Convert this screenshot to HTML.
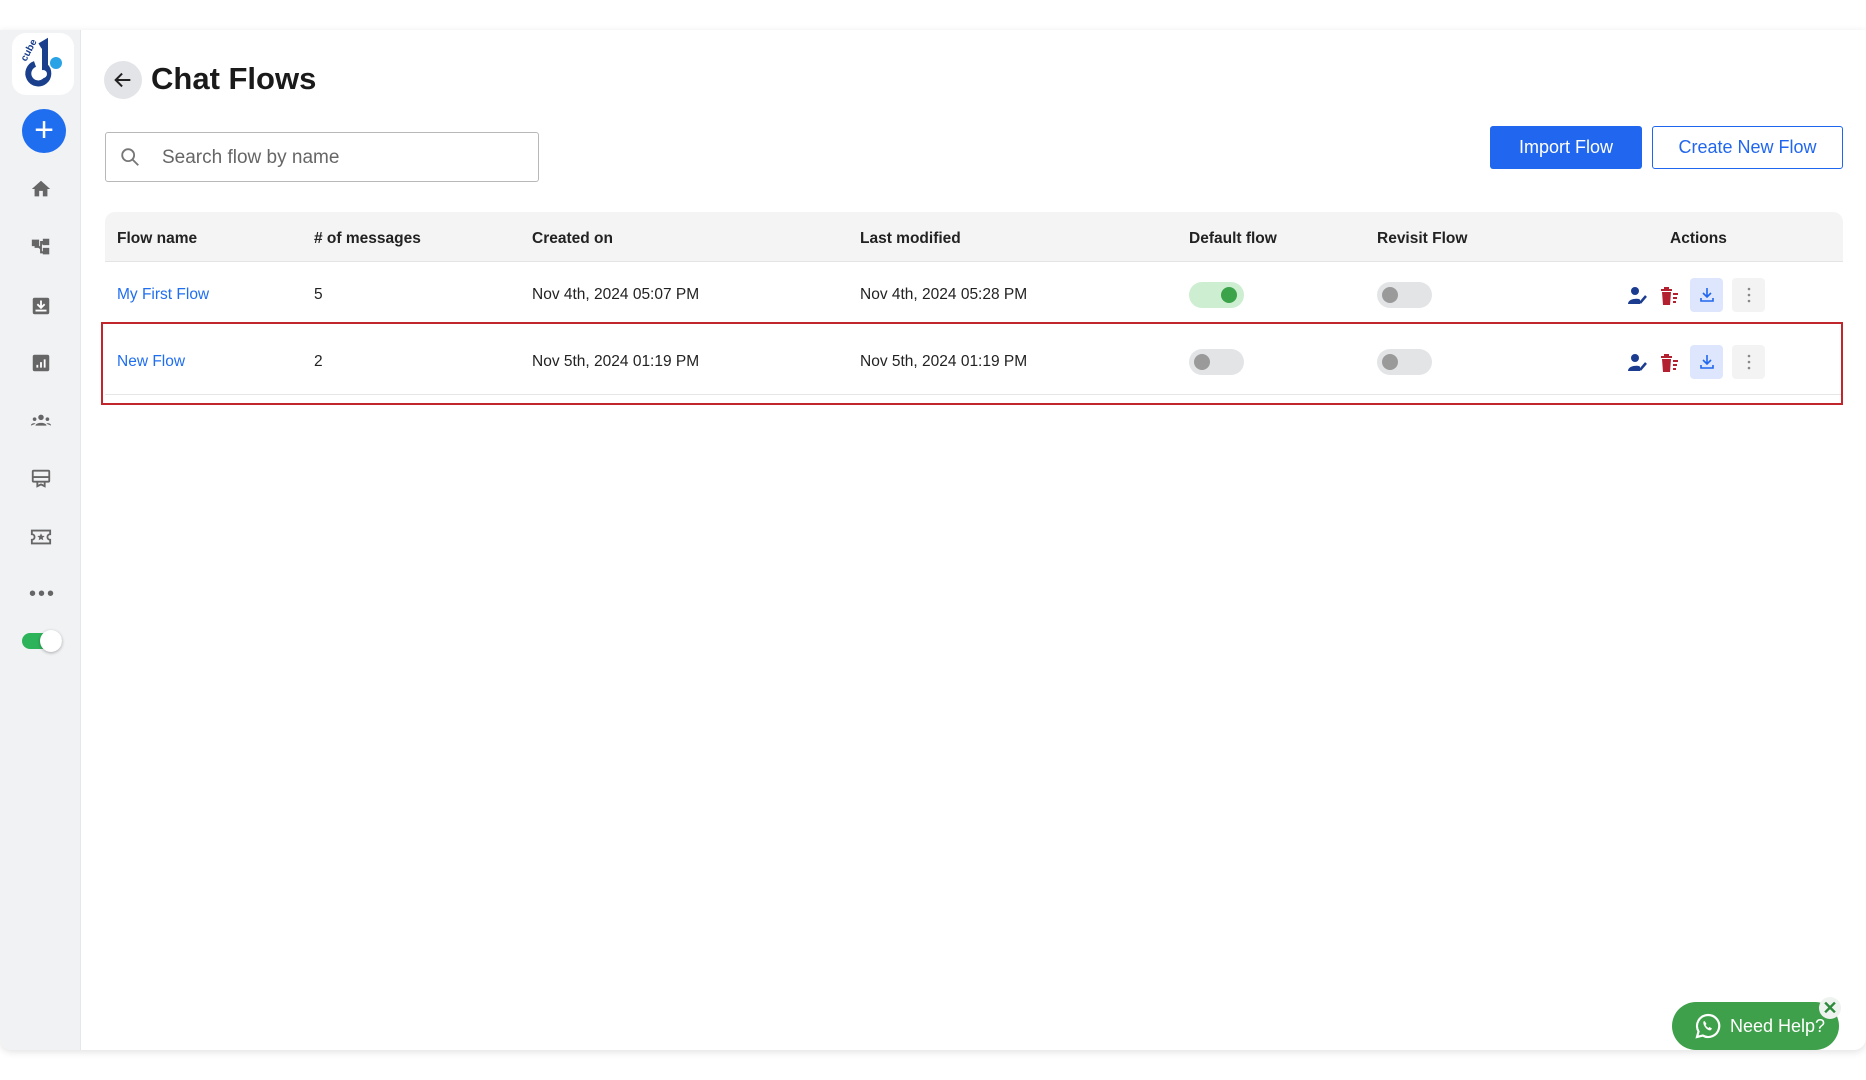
<!DOCTYPE html>
<html><head><meta charset="utf-8"><style>
*{box-sizing:border-box;margin:0;padding:0}
body{width:1866px;height:1080px;background:#fff;font-family:"Liberation Sans",sans-serif;position:relative;overflow:hidden;color:#222}
.card{position:absolute;left:0;top:30px;width:1866px;height:1020px;background:#fff;box-shadow:0 2px 8px rgba(0,0,0,.12);border-radius:0 0 12px 12px}
.side{position:absolute;left:0;top:30px;width:81px;height:1020px;background:#f1f2f4;border-right:1px solid #e6e7ea;border-radius:0 0 0 12px}
.ic{position:absolute;left:30px;width:22px;height:22px}
.abs{position:absolute}
.tg{position:absolute;width:55px;height:26px;border-radius:13px;background:#e3e4e6}
.tg i{position:absolute;top:5px;width:16px;height:16px;border-radius:50%;background:#9a9a9a}
</style></head><body>
<div class="card"></div>
<div class="side"></div>
<div class="abs" style="left:12px;top:33px;width:62px;height:62px;background:#fff;border-radius:14px"></div>
<svg class="abs" style="left:16px;top:36px" width="56" height="56" viewBox="0 0 56 56"><text x="0" y="0" font-size="10" font-weight="bold" fill="#1a3f8c" transform="translate(10 26) rotate(-62)" font-family="Liberation Sans">cube</text><path d="M24 10 L29 7 L29 36" fill="none" stroke="#1a3f8c" stroke-width="6"/><path d="M29 30 A10 10 0 1 1 19 28" fill="none" stroke="#1a3f8c" stroke-width="6"/><circle cx="40" cy="27" r="6" fill="#2aa3e6"/><circle cx="27" cy="38" r="4" fill="#fff"/></svg>
<div class="abs" style="left:22px;top:109px;width:44px;height:44px;border-radius:50%;background:#1f6ef0;color:#fff;font-size:34px;line-height:42px;text-align:center">+</div>
<svg class="ic" style="top:178px" viewBox="0 0 24 24"><path d="M12 3L2 12h3v8h5v-6h4v6h5v-8h3z" fill="#666"/></svg>
<svg class="ic" style="top:236px" viewBox="0 0 24 24"><path d="M3 5h6v5H3zM15 4h5v5h-5zM15 14h5v5h-5zM6 10v2h6v6h3M12 12V6.5h3" fill="#666" stroke="#666" stroke-width="2"/></svg>
<svg class="ic" style="top:295px" viewBox="0 0 24 24"><rect x="3" y="3" width="18" height="18" rx="2" fill="#666"/><path d="M12 6v8M8 10l4 4 4-4M6 17h12" stroke="#fff" stroke-width="2" fill="none"/></svg>
<svg class="ic" style="top:352px" viewBox="0 0 24 24"><rect x="3" y="3" width="18" height="18" rx="2" fill="#666"/><path d="M8 17v-3M12 17v-6M16 17V8" stroke="#fff" stroke-width="2"/></svg>
<svg class="ic" style="top:410px" viewBox="0 0 24 24"><circle cx="12" cy="8" r="3" fill="#666"/><circle cx="5" cy="10" r="2" fill="#666"/><circle cx="19" cy="10" r="2" fill="#666"/><path d="M6 17c0-4 12-4 12 0zM1 17c0-3 5-3 5-2zM23 17c0-3-5-3-5-2z" fill="#666"/></svg>
<svg class="ic" style="top:467px" viewBox="0 0 24 24"><rect x="3" y="4" width="18" height="12" rx="1" fill="none" stroke="#666" stroke-width="2"/><path d="M3 11h18M8 16v5l4-2 4 2v-5" stroke="#666" stroke-width="2" fill="none"/></svg>
<svg class="ic" style="top:526px" viewBox="0 0 24 24"><path d="M2 5h20v4a3 3 0 0 0 0 6v4H2v-4a3 3 0 0 0 0-6z" fill="none" stroke="#666" stroke-width="2"/><path d="M12 8l1.2 2.6 2.8.3-2.1 1.9.6 2.8L12 14.2 9.5 15.6l.6-2.8L8 10.9l2.8-.3z" fill="#666"/></svg>
<div class="abs" style="left:29px;top:590px;font-size:20px;color:#666;letter-spacing:2px;line-height:8px">•••</div>
<div class="abs" style="left:22px;top:633px;width:40px;height:16px;border-radius:8px;background:#2db35a"></div>
<div class="abs" style="left:40px;top:630px;width:22px;height:22px;border-radius:50%;background:#fff;box-shadow:0 1px 3px rgba(0,0,0,.3)"></div>

<div class="abs" style="left:104px;top:61px;width:38px;height:38px;border-radius:50%;background:#e3e4e8"></div>
<svg class="abs" style="left:112px;top:69px" width="22" height="22" viewBox="0 0 24 24"><path d="M20 12H5M11 5l-7 7 7 7" stroke="#222" stroke-width="2.2" fill="none"/></svg>
<div class="abs" style="left:151px;top:61px;font-size:31px;font-weight:bold;color:#1a1a1a">Chat Flows</div>

<div class="abs" style="left:105px;top:132px;width:434px;height:50px;border:1px solid #b8b8b8;border-radius:3px"></div>
<svg class="abs" style="left:119px;top:146px" width="22" height="22" viewBox="0 0 24 24"><circle cx="10" cy="10" r="6.5" stroke="#777" stroke-width="2" fill="none"/><path d="M15 15l6 6" stroke="#777" stroke-width="2"/></svg>
<div class="abs" style="left:162px;top:147px;font-size:19px;color:#666">Search flow by name</div>

<div class="abs" style="left:1490px;top:126px;width:152px;height:43px;background:#2166ee;border-radius:3px;color:#fff;font-size:18px;text-align:center;line-height:43px">Import Flow</div>
<div class="abs" style="left:1652px;top:126px;width:191px;height:43px;border:1.5px solid #2166ee;border-radius:3px;color:#2166ee;font-size:18px;text-align:center;line-height:41px">Create New Flow</div>

<div class="abs" style="left:105px;top:212px;width:1738px;height:50px;background:#f4f4f5;border-radius:10px 10px 0 0;border-bottom:1px solid #e4e4e4"></div>
<div class="abs" style="left:105px;top:323px;width:1738px;height:1px;background:#e6e6e6"></div>
<div class="abs" style="left:105px;top:394px;width:1738px;height:1px;background:#e6e6e6"></div>
<div class="abs" style="left:101px;top:322px;width:1742px;height:83px;border:2px solid #c0262b"></div>

<div style="font-weight:bold;font-size:15.5px;color:#222">
<div class="abs" style="left:117px;top:230px">Flow name</div>
<div class="abs" style="left:314px;top:230px"># of messages</div>
<div class="abs" style="left:532px;top:230px">Created on</div>
<div class="abs" style="left:860px;top:230px">Last modified</div>
<div class="abs" style="left:1189px;top:230px">Default flow</div>
<div class="abs" style="left:1377px;top:230px">Revisit Flow</div>
<div class="abs" style="left:1670px;top:230px">Actions</div>
</div>
<div style="font-size:15.5px;color:#222">
<div class="abs" style="left:117px;top:286px;color:#1f6ef0">My First Flow</div>
<div class="abs" style="left:314px;top:286px">5</div>
<div class="abs" style="left:532px;top:286px">Nov 4th, 2024 05:07 PM</div>
<div class="abs" style="left:860px;top:286px">Nov 4th, 2024 05:28 PM</div>
<div class="abs" style="left:117px;top:353px;color:#1f6ef0">New Flow</div>
<div class="abs" style="left:314px;top:353px">2</div>
<div class="abs" style="left:532px;top:353px">Nov 5th, 2024 01:19 PM</div>
<div class="abs" style="left:860px;top:353px">Nov 5th, 2024 01:19 PM</div>
</div>
<div class="tg" style="left:1189px;top:282px;background:#cdeed1"><i style="left:32px;background:#3ba34a"></i></div>
<div class="tg" style="left:1377px;top:282px"><i style="left:5px"></i></div>
<div class="tg" style="left:1189px;top:349px"><i style="left:5px"></i></div>
<div class="tg" style="left:1377px;top:349px"><i style="left:5px"></i></div>

<svg width="0" height="0" style="position:absolute"><defs>
<g id="pe"><circle cx="8" cy="6" r="4" fill="#1b3c8f"/><path d="M1 19c0-6 12-6 12-4v4z" fill="#1b3c8f"/><path d="M13 18l6-7" stroke="#1b3c8f" stroke-width="2.5"/></g>
<g id="tr"><path d="M3 5h11M6 3h5" stroke="#b3202f" stroke-width="2"/><path d="M4 7h9l-1 13H5z" fill="#b3202f"/><path d="M15 9h5M15 13h4M15 17h3" stroke="#b3202f" stroke-width="2"/></g>
</defs></svg>
<svg class="abs" style="left:1627px;top:285px" width="22" height="22" viewBox="0 0 22 22"><use href="#pe"/></svg>
<svg class="abs" style="left:1658px;top:285px" width="22" height="22" viewBox="0 0 22 22"><use href="#tr"/></svg>
<svg class="abs" style="left:1627px;top:352px" width="22" height="22" viewBox="0 0 22 22"><use href="#pe"/></svg>
<svg class="abs" style="left:1658px;top:352px" width="22" height="22" viewBox="0 0 22 22"><use href="#tr"/></svg>
<div class="abs" style="left:1690px;top:278px;width:33px;height:34px;background:#dde6fd;border-radius:4px"></div>
<div class="abs" style="left:1732px;top:278px;width:33px;height:34px;background:#f3f3f4;border-radius:4px"></div>
<div class="abs" style="left:1690px;top:345px;width:33px;height:34px;background:#dde6fd;border-radius:4px"></div>
<div class="abs" style="left:1732px;top:345px;width:33px;height:34px;background:#f3f3f4;border-radius:4px"></div>
<svg class="abs" style="left:1698px;top:286px" width="18" height="18" viewBox="0 0 18 18"><path d="M9 2v9M5 7l4 4 4-4M3 12v3h12v-3" stroke="#2166ee" stroke-width="1.6" fill="none"/></svg>
<svg class="abs" style="left:1698px;top:353px" width="18" height="18" viewBox="0 0 18 18"><path d="M9 2v9M5 7l4 4 4-4M3 12v3h12v-3" stroke="#2166ee" stroke-width="1.6" fill="none"/></svg>
<svg class="abs" style="left:1740px;top:286px" width="18" height="18" viewBox="0 0 18 18"><circle cx="9" cy="3" r="1.3" fill="#888"/><circle cx="9" cy="9" r="1.3" fill="#888"/><circle cx="9" cy="15" r="1.3" fill="#888"/></svg>
<svg class="abs" style="left:1740px;top:353px" width="18" height="18" viewBox="0 0 18 18"><circle cx="9" cy="3" r="1.3" fill="#888"/><circle cx="9" cy="9" r="1.3" fill="#888"/><circle cx="9" cy="15" r="1.3" fill="#888"/></svg>

<div class="abs" style="left:1672px;top:1002px;width:167px;height:48px;border-radius:24px;background:#3ea04a"></div>
<svg class="abs" style="left:1694px;top:1012px" width="28" height="28" viewBox="0 0 28 28"><path d="M14 3a11 11 0 0 0-9.5 16.5L3 25l5.7-1.5A11 11 0 1 0 14 3z" fill="none" stroke="#fff" stroke-width="2.2"/><path d="M10 9c-1 1-1 3 1 6s5 4 6 3l1-1.5-2.5-1.5-1 1c-1-.5-2.5-2-3-3l1-1-1.5-2.5z" fill="#fff"/></svg>
<div class="abs" style="left:1730px;top:1016px;font-size:18px;color:#fff">Need Help?</div>
<div class="abs" style="left:1819px;top:997px;width:22px;height:22px;border-radius:50%;background:#eef3ef;color:#2e8a3c;font-weight:bold;font-size:18px;text-align:center;line-height:22px">✕</div>
</body></html>
